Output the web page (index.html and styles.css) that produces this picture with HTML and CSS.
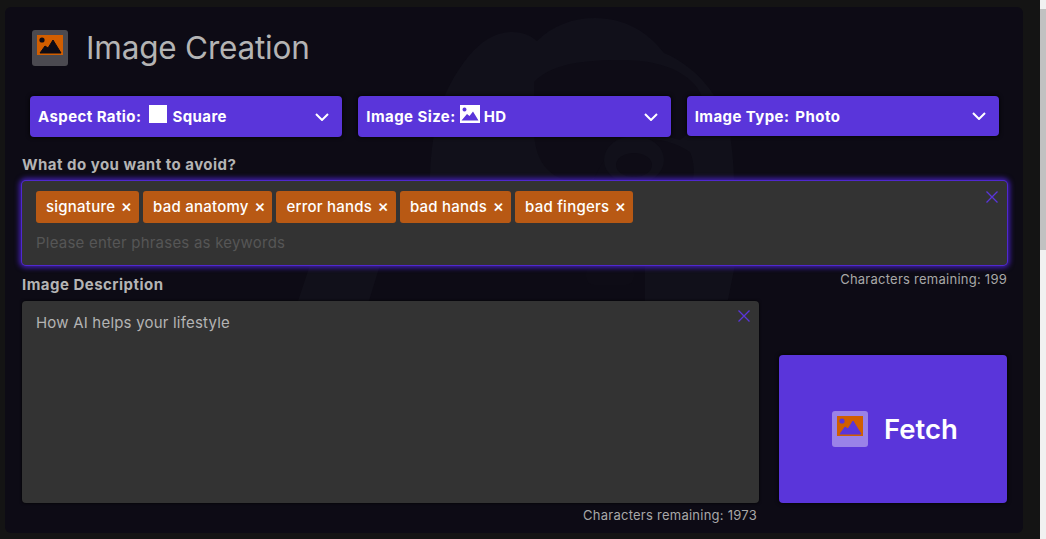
FILE: index.html
```html
<!DOCTYPE html>
<html lang="en">
<head>
<meta charset="utf-8">
<title>Image Creation</title>
<link rel="stylesheet" href="styles.css">
</head>
<body>
<div class="viewport">
  <main class="card">
    <svg class="watermark" viewBox="5 7 1018 526" aria-hidden="true">
      <path class="wm-fill" d="M430 175 C432 130 440 95 462 65 C478 42 495 32 512 32 C522 32 530 35 537 41 C552 26 572 18 595 18 C625 18 648 32 664 53 C695 66 722 95 730 135 C735 165 735 200 735 265 L728 300 L645 304 L645 265 L380 265 L368 304 L297 304 L310 265 L428 265 C428 235 428 205 430 175 Z"/>
      <path class="wm-dark" d="M534 130 L534 82 C550 66 575 60 620 60 C655 60 680 68 695 85 C712 105 700 125 680 140 C650 130 620 135 605 160 C600 185 570 190 548 170 C538 160 534 145 534 130 Z"/>
      <path class="wm-dark" d="M575 215 C590 200 590 175 612 150 C630 135 665 135 690 152 C700 175 690 205 660 225 C635 240 600 240 575 215 Z"/>
      <ellipse class="wm-fill" cx="634" cy="160" rx="30" ry="24"/>
      <ellipse class="wm-dark" cx="634" cy="165" rx="18" ry="12"/>
      <rect class="wm-dark" x="586" y="265" width="48" height="20" rx="8"/>
    </svg>
    <header class="title-row">
      <span class="title-icon">
        <svg viewBox="0 0 26 20" class="pic"><rect width="26" height="20" fill="#d15e00"/><circle cx="5" cy="5" r="2.600" fill="#0d0b15"/><path d="M3 18 L8 11 L11 13 L16 5 L24 18 Z" fill="#0d0b15" stroke="#0d0b15" stroke-linejoin="round"/></svg>
      </span>
      <h1 class="title">Image Creation</h1>
    </header>

    <section class="selects">
      <div class="select">
        <span class="select-label">Aspect Ratio:</span>
        <span class="square"></span>
        <span class="select-value">Square</span>
        <svg class="chevron" viewBox="0 0 14 8"><path d="M1 1 L7 7 L13 1"/></svg>
      </div>
      <div class="select">
        <span class="select-label">Image Size:</span>
        <svg class="mini-pic" viewBox="0 0 20 18"><path fill-rule="evenodd" d="M0 0H20V18H0Z M1.500 15.500H18.500L13 6.500L9.500 11L7 9Z M4.500 2.500a2 2 0 1 0 .01 0Z" fill="#fff"/></svg>
        <span class="select-value">HD</span>
        <svg class="chevron" viewBox="0 0 14 8"><path d="M1 1 L7 7 L13 1"/></svg>
      </div>
      <div class="select select-short">
        <span class="select-label">Image Type:</span>
        <span class="select-value type-value">Photo</span>
        <svg class="chevron" viewBox="0 0 14 8"><path d="M1 1 L7 7 L13 1"/></svg>
      </div>
    </section>

    <label class="field-label avoid-label">What do you want to avoid?</label>
    <div class="tag-box">
      <ul class="tags">
        <li class="tag">signature<span class="tag-x">×</span></li>
        <li class="tag">bad anatomy<span class="tag-x">×</span></li>
        <li class="tag">error hands<span class="tag-x">×</span></li>
        <li class="tag">bad hands<span class="tag-x">×</span></li>
        <li class="tag">bad fingers<span class="tag-x">×</span></li>
      </ul>
      <div class="placeholder">Please enter phrases as keywords</div>
      <svg class="clear" viewBox="0 0 12 12"><path d="M0.500 0.500 L11.500 11.500 M11.500 0.500 L0.500 11.500"/></svg>
    </div>

    <div class="desc-head">
      <label class="field-label desc-label">Image Description</label>
      <span class="counter counter-top">Characters remaining: 199</span>
    </div>

    <div class="desc-row">
      <div class="desc-col">
        <div class="textarea">How AI helps your lifestyle
          <svg class="clear clear-area" viewBox="0 0 12 12"><path d="M0.500 0.500 L11.500 11.500 M11.500 0.500 L0.500 11.500"/></svg>
        </div>
        <div class="counter counter-bottom">Characters remaining: 1973</div>
      </div>
      <button class="fetch" type="button">
        <span class="fetch-icon">
          <svg viewBox="0 0 26 20" class="pic"><rect width="26" height="20" fill="#d15e00"/><circle cx="5" cy="5" r="2.600" fill="#5a35da"/><path d="M3 18 L8 11 L11 13 L16 5 L24 18 Z" fill="#5a35da" stroke="#5a35da" stroke-linejoin="round"/></svg>
        </span>
        <span class="fetch-text">Fetch</span>
      </button>
    </div>
  </main>
  <div class="scrollbar"><div class="thumb"></div></div>
</div>
</body>
</html>
```
FILE: styles.css
```css
* { box-sizing: border-box; }
html, body { margin: 0; height: 539px; overflow: hidden; }
body { background: #141414; font-family: Inter, "Liberation Sans", sans-serif; color: #b4b4b4; }

.viewport { display: flex; height: 539px; padding: 7px 0 0 5px; }

.card {
  position: relative;
  flex: none;
  width: 1018px;
  height: 526px;
  padding: 23px 16px 0 17px;
  background: #0d0b15;
  border-radius: 6px;
  overflow: hidden;
}

.watermark { position: absolute; left: 0; top: 0; width: 1018px; height: 526px; }
.wm-fill { fill: #11101a; }
.wm-dark { fill: #0e0c16; }

.card > *:not(.watermark) { position: relative; }

.title-row { display: flex; align-items: center; gap: 18px; padding-left: 10px; height: 36px; }
.title-icon, .fetch-icon {
  display: flex; align-items: center; justify-content: center;
  width: 36px; height: 36px; border-radius: 3px; flex: none;
}
.title-icon { background: #4b4a50; }
.fetch-icon { background: #9a82e8; }
.pic { width: 26px; height: 20px; display: block; margin-top: -6px; }
.title { margin: 0; font-size: 31.500px; font-weight: 400; line-height: 36px; color: #b4b4b4; letter-spacing: -0.2px; }

.selects { display: grid; grid-template-columns: repeat(3, 1fr); gap: 16px; padding: 0 8px; margin-top: 30px; align-items: start; }
.select {
  display: flex; align-items: center;
  height: 41px; padding: 0 12px 0 8px;
  background: #5a35da; border-radius: 4px;
  box-shadow: 0 0 4px #000;
  color: #fff; font-size: 15px; font-weight: 700; letter-spacing: 0.420px; white-space: nowrap;
}
.select-short { height: 40px; }
.square { width: 18px; height: 18px; background: #fff; margin: -5px 5px 0 8px; }
.mini-pic { width: 20px; height: 18px; margin: -5px 4px 0 4px; }
.type-value { margin-left: 6px; }
.chevron { width: 14px; height: 8px; margin-left: auto; fill: none; stroke: #fff; stroke-width: 2; margin-right: 1px; }

.field-label { display: block; font-size: 15px; font-weight: 700; letter-spacing: 0.480px; line-height: 20px; color: #b4b4b4; }
.avoid-label { margin-top: 18px; margin-bottom: 6px; }

.tag-box {
  height: 84px; padding: 10px 14px;
  background: #333; border-radius: 4px;
  box-shadow: 0 0 0 1px #5028d0, 0 0 5px 3px #3f1fa8;
}
.tags { display: flex; gap: 4px; list-style: none; margin: 0; padding: 0; }
.tag {
  display: flex; align-items: center; justify-content: space-between;
  height: 32px; padding: 0 7px 2px 10px;
  background: #b85914; color: #fff; border-radius: 3px;
  font-size: 15px; font-weight: 500; letter-spacing: 0.230px; white-space: nowrap;
}
.tag-x { margin-left: 5.500px; font-size: 17px; letter-spacing: 0; }
.placeholder { margin-top: 9px; line-height: 22px; font-size: 15px; letter-spacing: 0.220px; color: #565656; }

.clear { position: absolute; top: 10px; right: 9px; width: 12px; height: 12px; fill: none; stroke: #5a35da; stroke-width: 1.300; }
.clear-area { top: 9px; }

.desc-head { display: flex; justify-content: space-between; height: 30px; margin-bottom: 6px; }
.desc-label { margin-top: 10px; }
.counter { font-size: 13px; letter-spacing: 0.250px; line-height: 20px; color: #a8a8a8; }
.counter-top { margin-top: 4px; }

.desc-row { display: grid; grid-template-columns: 737px 228px; gap: 20px; }
.desc-col { display: flex; flex-direction: column; }
.textarea {
  position: relative;
  height: 202px; padding: 12px 14px;
  background: #333; border-radius: 4px;
  box-shadow: 0 0 3px #000;
  font-size: 15px; letter-spacing: 0.200px; line-height: 20px; color: #b4b4b4;
}
.counter-bottom { text-align: right; padding-right: 2px; margin-top: 2px; }

.fetch {
  display: flex; align-items: center; justify-content: center; gap: 16px;
  height: 148px; margin-top: 54px; padding: 0 0 0 4px;
  background: #5a35da; border: 0; border-radius: 4px;
  box-shadow: 0 0 4px #000;
  font-family: inherit; color: #fff;
}
.fetch-text { font-size: 27.500px; font-weight: 600; }

.scrollbar { position: fixed; top: 0; right: 0; width: 6px; height: 539px; background: #f1f1f1; padding-top: 9px; }
.thumb { width: 6px; height: 241px; background: #c1c1c1; }
```
